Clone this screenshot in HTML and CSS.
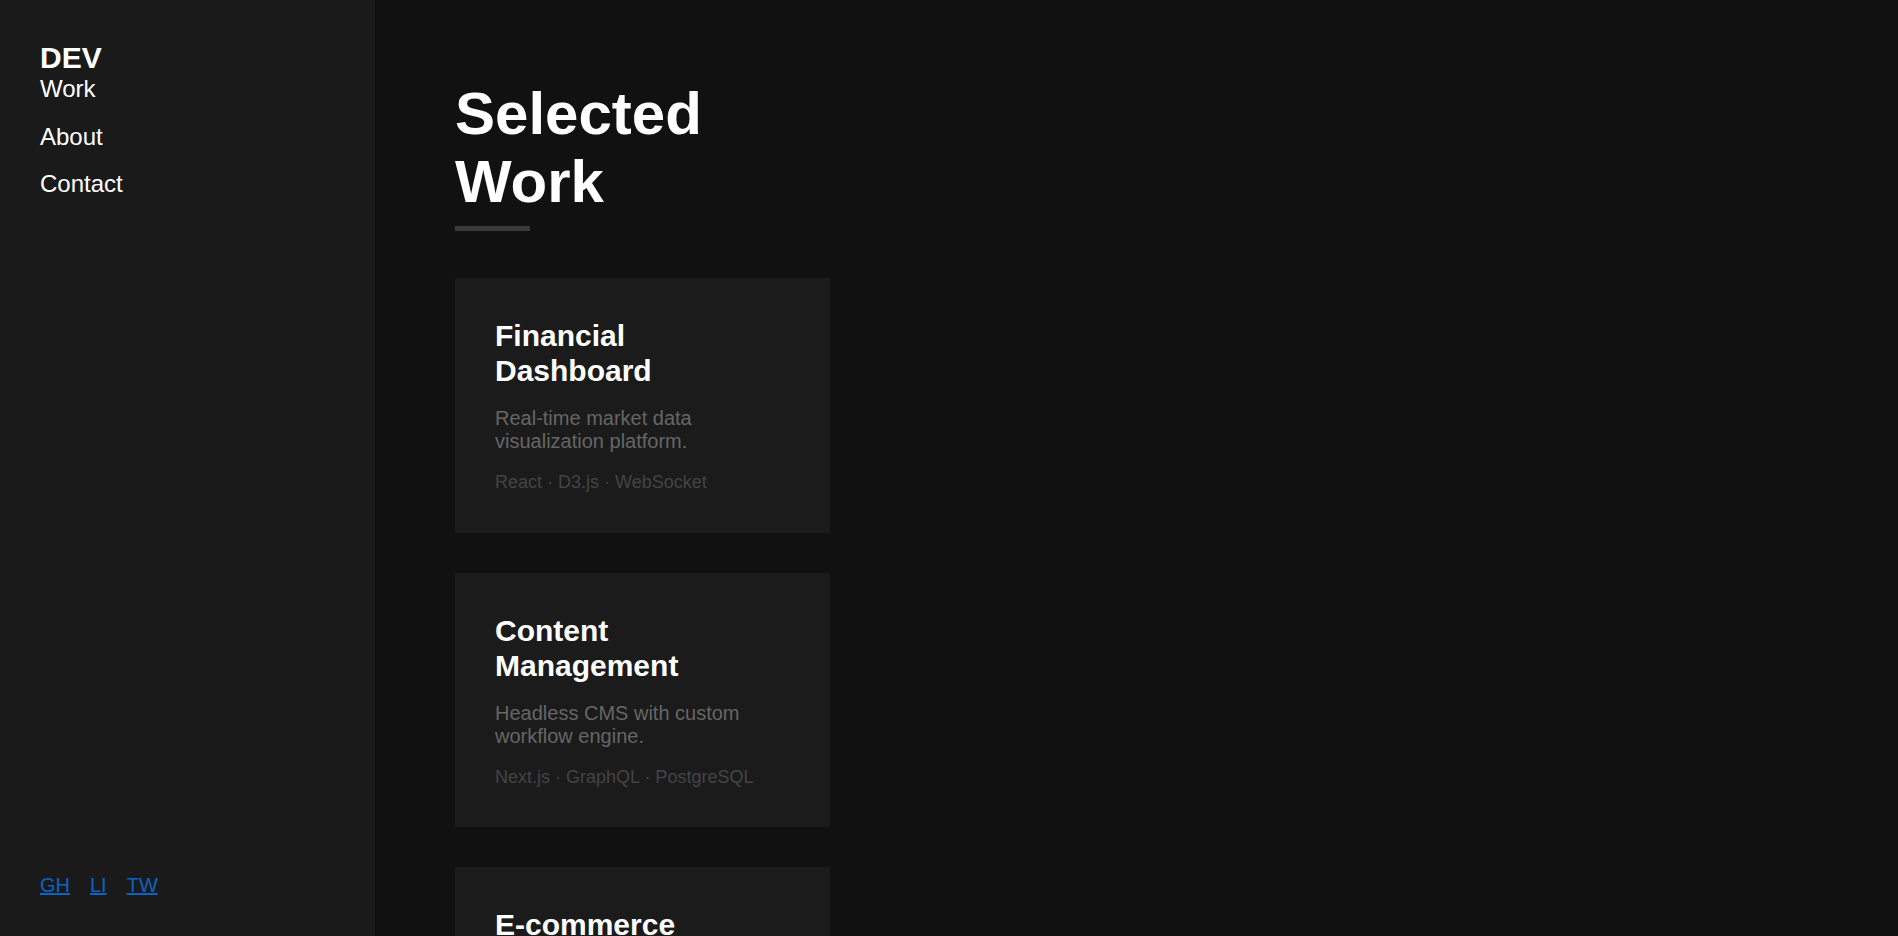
FILE: index.html
```html
<!DOCTYPE html>
<html lang="en">
<head>
  <meta charset="UTF-8" />
  <meta name="viewport" content="width=device-width, initial-scale=1.0" />
  <title>DEV - Selected Work</title>
  <link rel="stylesheet" href="styles.css">
</head>

<body>
  <aside class="sidebar">
    <div class="logo">DEV</div>
    <nav class="nav">
      <a href="#work">Work</a>
      <a href="#about">About</a>
      <a href="#contact">Contact</a>
    </nav>

    <div class="social">
      <a href="#">GH</a>
      <a href="#">LI</a>
      <a href="#">TW</a>
    </div>
  </aside>

  <main class="main" id="work">
    <div class="content">
      <h1 class="page-title">Selected Work</h1>
      <div class="title-bar"></div>

      <div class="project">
        <h2>Financial Dashboard</h2>
        <p class="desc">Real-time market data visualization platform.</p>
        <p class="tags">React · D3.js · WebSocket</p>
      </div>

      <div class="project">
        <h2>Content Management</h2>
        <p class="desc">Headless CMS with custom workflow engine.</p>
        <p class="tags">Next.js · GraphQL · PostgreSQL</p>
      </div>

      <div class="project">
        <h2>E-commerce Platform</h2>
        <p class="desc">Scalable storefront with headless checkout.</p>
        <p class="tags">Vue · Node.js · Stripe</p>
      </div>
    </div>
  </main>
</body>
</html>
```

FILE: styles.css
```css
body {
  font-family: "Liberation Sans", Arial, sans-serif;
  background-color: #111111;
  color: #ffffff;
  margin: 0;
  display: flex;
  align-items: flex-start;
}
.sidebar {
  width: 375px;
  flex-shrink: 0;
  height: 100vh;
  box-sizing: border-box;
  padding: 41px 40px 39px;
  background-color: #1a1a1a;
  display: flex;
  flex-direction: column;
  position: sticky;
  top: 0;
}
.logo {
  font-size: 30px;
  font-weight: 700;
  line-height: 34px;
}
.nav {
  display: flex;
  flex-direction: column;
  gap: 20.5px;
}
.nav a {
  color: #ffffff;
  text-decoration: none;
  font-size: 24px;
  line-height: 27px;
}
.social {
  margin-top: auto;
  display: flex;
  gap: 20px;
}
.social a {
  color: #0b64c4;
  font-size: 20px;
  line-height: 23px;
}
.main {
  flex: 1;
  padding: 80px;
}
.content {
  width: 375px;
}
.page-title {
  font-size: 60px;
  line-height: 68px;
  font-weight: 700;
  margin: 0;
}
.title-bar {
  width: 75px;
  height: 5px;
  background-color: #3a3a3a;
  margin-top: 10px;
  margin-bottom: 47px;
}
.project {
  background-color: #1b1b1b;
  padding: 40px 60px 40px 40px;
  margin-bottom: 40px;
}
.project h2 {
  font-size: 30px;
  line-height: 35px;
  font-weight: 700;
  margin: 0 0 19px;
}
.desc {
  color: #666666;
  font-size: 20px;
  line-height: 23px;
  margin: 0 0 19px;
}
.tags {
  color: #444444;
  font-size: 18px;
  line-height: 20.7px;
  margin: 0;
}
```
